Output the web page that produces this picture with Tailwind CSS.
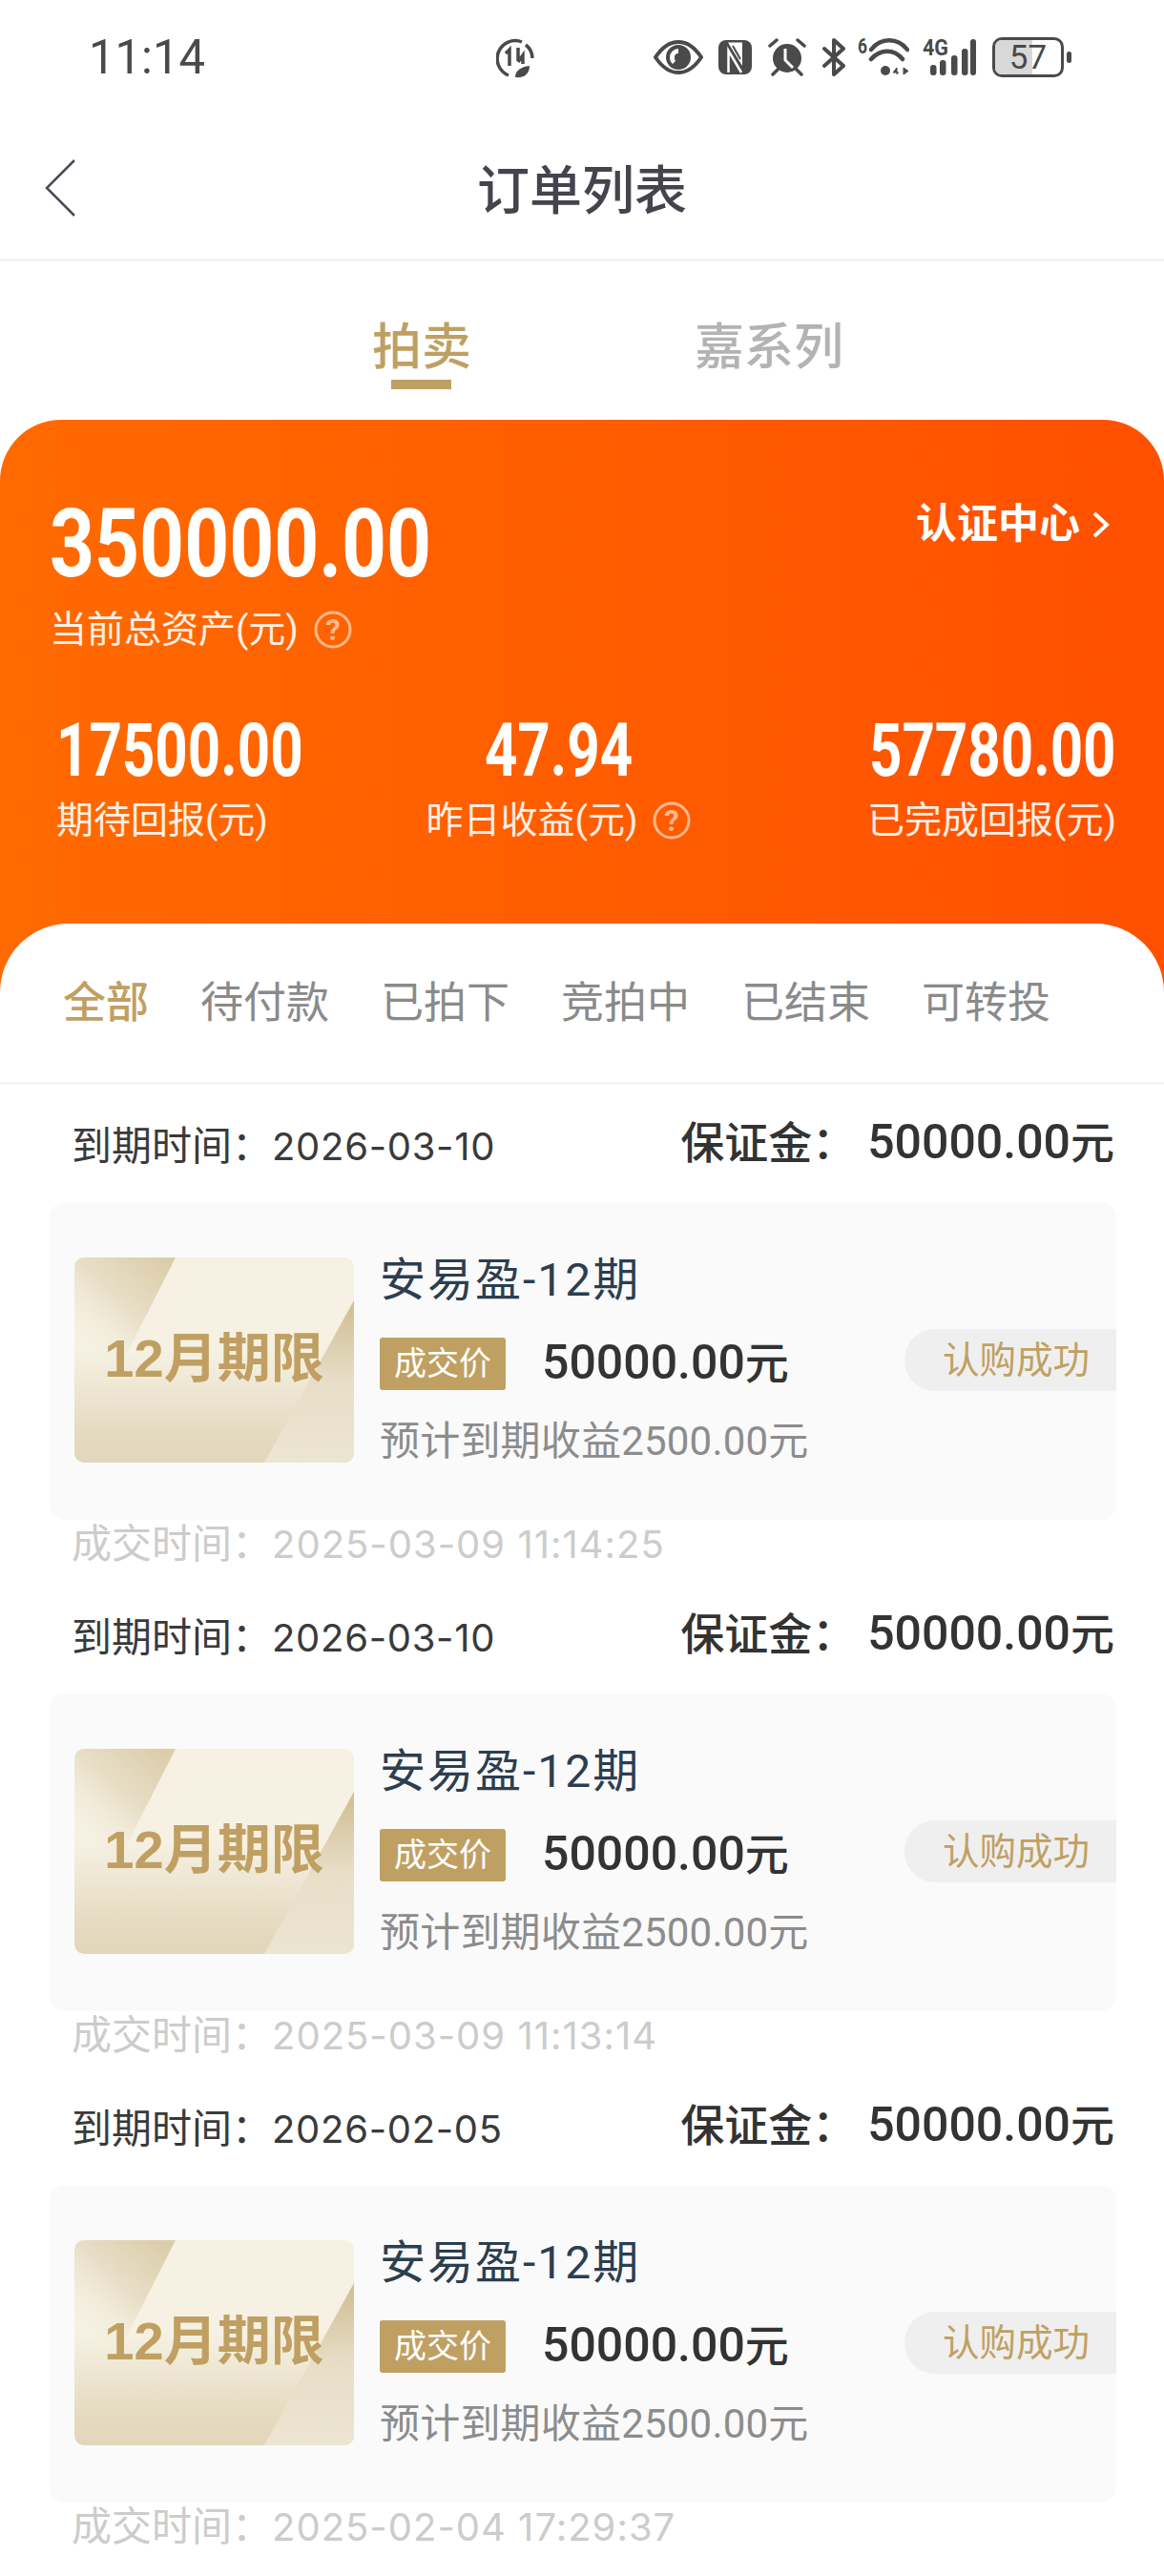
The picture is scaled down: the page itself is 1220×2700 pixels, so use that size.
<!DOCTYPE html>
<html lang="zh">
<head>
    <meta charset="UTF-8">
    <title>订单列表</title>
    <script src="https://cdn.jsdelivr.net/npm/@tailwindcss/browser@4"></script>
</head>
<body class="bg-white font-['Roboto','Noto_Sans_CJK_SC',sans-serif] w-[1220px] h-[2700px] overflow-hidden">

    <!-- Status bar -->
    <div class="h-[120px] flex items-center relative text-[#4a4a4a]">
        <span class="ml-[93px] text-[50px] leading-none scale-x-[0.98] origin-left">11:14</span>
        <svg class="absolute left-[520px] top-[40px]" width="40" height="42" viewBox="0 0 40 42" fill="none" stroke="#4a4a4a">
            <path d="M27 4A18 18 0 1 0 13 39" stroke-width="3.5"/>
            <path d="M31 7A18 18 0 0 1 38 21" stroke-width="3.5"/>
            <path d="M14 29V12l-4 4" stroke-width="3.5"/>
            <path d="M23 10v14M23 25l5-7v9" stroke-width="3.5"/>
            <path d="M20 41c0-7 6-11 15-12 0 8-5 13-15 12z" fill="#4a4a4a" stroke="none"/>
        </svg>
        <div class="absolute left-[685px] top-[38px] flex items-center h-[44px]">
            <svg width="52" height="36" viewBox="0 0 52 36">
                <path d="M2 18C10 6 18 2 26 2s16 4 24 16C42 30 34 34 26 34S10 30 2 18z" fill="none" stroke="#4a4a4a" stroke-width="4"/>
                <circle cx="26" cy="18" r="13" fill="#4a4a4a"/>
                <path d="M26 9a9 9 0 0 0-9 9 9 9 0 0 0 3 7l3-3a5 5 0 0 1-1-4 4 4 0 0 1 4-4z" fill="#fff"/>
            </svg>
            <svg width="35" height="36" viewBox="0 0 35 36" class="ml-[16px]">
                <rect width="35" height="36" rx="8" fill="#4a4a4a"/>
                <path d="M10 2.500H25V27z" fill="#fff"/>
                <path d="M15 6l8 14" stroke="#4a4a4a" stroke-width="2" fill="none"/>
                <path d="M10.500 34V11L24 34" stroke="#fff" stroke-width="2.500" fill="none"/>
            </svg>
            <svg width="40" height="40" viewBox="0 0 40 40" class="ml-[17px]">
                <circle cx="20" cy="21" r="15" fill="#4a4a4a"/>
                <path d="M18 11v12l8 8" fill="none" stroke="#fff" stroke-width="3"/>
                <path d="M2 8l7-6M38 8l-7-6M5 38l5-5M35 38l-5-5" stroke="#4a4a4a" stroke-width="3.5" stroke-linecap="round"/>
            </svg>
            <svg width="24" height="40" viewBox="0 0 24 40" class="ml-[17px]">
                <path d="M2 11l20 18-10 9V2l10 9L2 29" fill="none" stroke="#4a4a4a" stroke-width="4" stroke-linejoin="round" stroke-linecap="round"/>
            </svg>
            <svg width="54" height="42" viewBox="0 0 54 42" class="ml-[13px]">
                <text x="0" y="17" font-size="22" font-weight="700" fill="#4a4a4a" font-family="Roboto" textLength="10" lengthAdjust="spacingAndGlyphs">6</text>
                <path d="M14 13C24 0 42 0 52 13M14 23C24 12 38 12 47 23" fill="none" stroke="#4a4a4a" stroke-width="4.5" stroke-linecap="round"/>
                <circle cx="29" cy="35" r="5" fill="#4a4a4a"/>
                <path d="M41 39V32l-4 5h6M48 32l5 3.5-5 3.500z" fill="#4a4a4a" stroke="#4a4a4a" stroke-width="1"/>
            </svg>
            <svg width="56" height="42" viewBox="0 0 56 42" class="ml-[14px]">
                <text x="0" y="19" font-size="23" font-weight="700" fill="#4a4a4a" font-family="Roboto" textLength="27" lengthAdjust="spacingAndGlyphs">4G</text>
                <rect x="8" y="29" width="6.500" height="11" rx="3" fill="#4a4a4a"/>
                <rect x="18" y="24" width="6.500" height="16" rx="3" fill="#4a4a4a"/>
                <rect x="30" y="19" width="6.500" height="21" rx="3" fill="#4a4a4a"/>
                <rect x="41" y="12" width="6.500" height="28" rx="3" fill="#4a4a4a"/>
                <rect x="50" y="2" width="6" height="38" rx="3" fill="#4a4a4a"/>
            </svg>
            <div class="ml-[17px] w-[75px] h-[42px] rounded-[10px] border-[3px] border-[#4a4a4a] relative overflow-hidden flex items-center justify-center">
                <div class="absolute left-0 top-0 bottom-0 w-[57%] bg-[#d8d8d8]"></div>
                <span class="relative text-[35px] leading-none">57</span>
            </div>
            <div class="ml-[3px] w-[5px] h-[12px] rounded-full bg-[#4a4a4a]"></div>
        </div>
    </div>

    <!-- Nav bar -->
    <div class="h-[153px] border-b border-[#e5e5e5] relative flex items-center justify-center">
        <svg class="absolute left-[46px] top-[46px]" width="34" height="62" viewBox="0 0 34 62" fill="none">
            <path d="M32 2L3 31l29 29" stroke="#4a4a58" stroke-width="2.500"/>
        </svg>
        <span class="text-[55px] leading-none text-[#44444f] font-medium mt-[8px]">订单列表</span>
    </div>

    <!-- Top tabs -->
    <div class="h-[167px] flex pl-[390px] relative">
        <div class="text-[52px] leading-[60px] font-medium text-[#c0a062] mt-[62px] relative h-[60px]">拍卖
            <div class="absolute left-[20px] top-[63px] w-[63px] h-[10px] bg-[#c0a062]"></div>
        </div>
        <div class="ml-[234px] text-[52px] leading-[60px] font-medium text-[#b3b3b3] mt-[62px] h-[60px]">嘉系列</div>
    </div>

    <!-- Assets card -->
    <div class="h-[600px] rounded-t-[64px] bg-[linear-gradient(90deg,#ff6a00,#ff5000)] text-white pt-[92px]">
        <div class="flex justify-between items-start pl-[52px] pr-[56px]">
            <div class="text-[100px] leading-[76px] font-bold origin-left scale-x-[0.82] w-[400px] whitespace-nowrap">350000.00</div>
            <div class="flex items-center text-[43px] leading-none font-bold mt-[-4px]">认证中心
                <svg class="ml-[12px]" width="20" height="30" viewBox="0 0 20 30" fill="none"><path d="M3 3l13 12L3 27" stroke="#fff" stroke-width="4"/></svg>
            </div>
        </div>
        <div class="flex items-center pl-[52px] mt-[28px] text-[39px] leading-[48px] text-white/90">当前总资产(元)
            <svg class="ml-[16px]" width="40" height="40" viewBox="0 0 40 40" fill="none"><circle cx="20" cy="20" r="18" stroke="#ffb98c" stroke-width="3"/><text x="20" y="31" text-anchor="middle" font-size="31" font-weight="700" fill="#ffb98c" font-family="Roboto">?</text></svg>
        </div>
        <div class="flex justify-between pl-[59px] pr-[50px] mt-[70px]">
            <div class="w-[256px]">
                <div class="text-[77px] leading-[66px] font-bold origin-left scale-x-[0.78] whitespace-nowrap">17500.00</div>
                <div class="text-[39px] leading-[48px] text-white/90 mt-[16px] whitespace-nowrap">期待回报(元)</div>
            </div>
            <div class="flex flex-col items-center w-[279px] ml-[-56px]">
                <div class="text-[77px] leading-[66px] font-bold scale-x-[0.78]">47.94</div>
                <div class="flex items-center text-[39px] leading-[48px] text-white/90 mt-[16px] whitespace-nowrap">昨日收益(元)
                    <svg class="ml-[16px]" width="40" height="40" viewBox="0 0 40 40" fill="none"><circle cx="20" cy="20" r="18" stroke="#ffb98c" stroke-width="3"/><text x="20" y="31" text-anchor="middle" font-size="31" font-weight="700" fill="#ffb98c" font-family="Roboto">?</text></svg>
                </div>
            </div>
            <div class="flex flex-col items-end w-[258px]">
                <div class="text-[77px] leading-[66px] font-bold origin-right scale-x-[0.78] whitespace-nowrap">57780.00</div>
                <div class="text-[39px] leading-[48px] text-white/90 mt-[16px] whitespace-nowrap">已完成回报(元)</div>
            </div>
        </div>
    </div>

    <!-- Filter tabs -->
    <div class="mt-[-72px] relative bg-white rounded-t-[72px] h-[168px] border-b border-[#e8e8e8] flex items-center pl-[66px] pb-[1px] gap-[54px] text-[45px] leading-none text-[#8a8a8a]">
        <span class="text-[#c0a062] font-medium">全部</span>
        <span>待付款</span>
        <span>已拍下</span>
        <span>竞拍中</span>
        <span>已结束</span>
        <span>可转投</span>
    </div>

    <!-- Orders -->
    <div id="orders"></div>

    <script>
        const orders = [
            { due: '2026-03-10', done: '2025-03-09 11:14:25' },
            { due: '2026-03-10', done: '2025-03-09 11:13:14' },
            { due: '2026-02-05', done: '2025-02-04 17:29:37' },
        ];

        document.getElementById('orders').innerHTML = orders.map(order => `
            <div class="h-[515px]">
                <div class="flex justify-between items-center pl-[75px] pr-[52px] h-[124px]">
                    <span class="text-[42px] leading-none text-[#3a3a3a] mt-[7px]">到期时间：<span class="font-['Inter'] text-[40px] tracking-[0.7px]">${order.due}</span></span>
                    <span class="text-[46px] leading-none text-[#333] font-medium mt-[-3px]">保证金：<span class="ml-[12px] text-[50px]">50000.00</span>元</span>
                </div>
                <div class="mx-[52px] w-[1118px] h-[333px] rounded-[16px] bg-[#fafafa] relative flex pl-[26px] pt-[58px]">
                    <div class="w-[293px] h-[215px] rounded-[10px] relative overflow-hidden flex items-center justify-center shrink-0">
                        <svg class="absolute inset-0" width="293" height="215" viewBox="0 0 293 215">
                            <defs>
                                <linearGradient id="base" x1="0" y1="0" x2="0" y2="1"><stop offset="0.45" stop-color="#f6f1e3"/><stop offset="0.85" stop-color="#e5dbc1"/><stop offset="1" stop-color="#e2d6ba"/></linearGradient>
                                <linearGradient id="corner" x1="0.95" y1="0.1" x2="0.2" y2="0.95"><stop offset="0" stop-color="#dccdaa"/><stop offset="0.5" stop-color="#e8dfc8"/><stop offset="1" stop-color="#f2ecdb" stop-opacity="0"/></linearGradient>
                                <linearGradient id="wedge" x1="0" y1="0" x2="0" y2="1"><stop offset="0" stop-color="#cfbd90"/><stop offset="0.5" stop-color="#e8dec8"/><stop offset="1" stop-color="#ece5d2"/></linearGradient>
                            </defs>
                            <rect width="293" height="215" fill="url(#base)"/>
                            <path d="M0 0H106L50 110H0z" fill="url(#corner)"/>
                            <path d="M293 45V215H199z" fill="url(#wedge)"/>
                        </svg>
                        <span class="relative text-[56px] leading-none font-bold text-[#c0a062] font-['Liberation_Sans','Noto_Sans_CJK_SC',sans-serif] mt-[-3px]">12月期限</span>
                    </div>
                    <div class="ml-[27px] flex flex-col">
                        <span class="text-[48px] leading-none text-[#2c3e50] tracking-[2px]">安易盈-12期</span>
                        <div class="flex items-center mt-[36px]">
                            <span class="w-[132px] h-[55px] rounded-[3px] bg-[#c0a062] text-white text-[34px] leading-[55px] text-center">成交价</span>
                            <span class="ml-[38px] text-[46px] leading-none text-[#333] font-medium mt-[-4px]"><span class="text-[50px]">50000.00</span>元</span>
                        </div>
                        <span class="mt-[33px] text-[42px] leading-none text-[#8c8c8c] tracking-[0.2px]">预计到期收益2500.00元</span>
                    </div>
                    <span class="absolute right-0 top-[133px] w-[222px] h-[65px] rounded-l-[32px] bg-[#efefef] text-[#c0a062] text-[38.500px] leading-[65px] pl-[40px]">认购成功</span>
                </div>
                <div class="pl-[75px] mt-[5px] text-[42px] leading-none text-[#cccccc]">成交时间：<span class="font-['Inter'] text-[40px] tracking-[1px]">${order.done}</span></div>
            </div>
        `).join('');
    </script>
</body>
</html>
